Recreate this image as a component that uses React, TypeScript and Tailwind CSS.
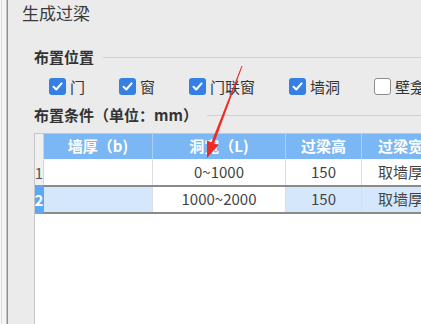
import React from 'react';

const options = [
  { label: '门', checked: true },
  { label: '窗', checked: true },
  { label: '门联窗', checked: true },
  { label: '墙洞', checked: true },
  { label: '壁龛', checked: false },
];

const rows = [
  { id: 1, wall: '', span: '0~1000', height: '150', width: '取墙厚', selected: false },
  { id: 2, wall: '', span: '1000~2000', height: '150', width: '取墙厚', selected: true },
];

function CheckBox({ checked }: { checked: boolean }) {
  if (!checked) {
    return <div className="w-[17px] h-[17px] shrink-0 rounded-[3px] border border-[#8c8c8c] bg-white" />;
  }
  return (
    <div className="w-[17px] h-[17px] shrink-0 rounded-[3px] bg-[#3580e2] flex items-center justify-center">
      <svg width="13" height="13" viewBox="0 0 13 13" fill="none">
        <path d="M2.5 6.8 L5.3 9.5 L10.6 3.4" stroke="white" strokeWidth="2" strokeLinecap="round" strokeLinejoin="round" />
      </svg>
    </div>
  );
}

function SectionTitle({ text }: { text: string }) {
  return (
    <div className="flex items-center h-5 gap-[9px]">
      <span className="text-[15px] font-bold text-[#333] whitespace-nowrap">{text}</span>
      <div className="flex-1 h-px bg-[#d2d2d2]" />
    </div>
  );
}

export default function App() {
  return (
    <div className="relative w-[421px] h-[324px] overflow-hidden flex bg-[#ebebeb] font-['Noto_Sans_CJK_SC','Noto_Sans',sans-serif] text-[#333]">
      {/* left window edge */}
      <div className="w-[8px] shrink-0 flex">
        <div className="w-[2px] bg-[#f6f6f6] border-r border-[#dcdcdc]" />
        <div className="w-[4px] bg-[#f4f4f4]" />
        <div className="w-[2px] bg-[#8e8e8e] border-l border-[#c4c4c4]" />
      </div>

      <div className="flex-1 flex flex-col min-w-0">
        {/* Title */}
        <div className="h-[26px] pl-[14px] flex items-center text-[17px] text-[#3a3a3a]">生成过梁</div>

        <div className="flex-1 flex flex-col pl-[26px] min-h-0">
          <div className="mt-[21px]">
            <SectionTitle text="布置位置" />
          </div>

          {/* Checkbox row */}
          <div className="mt-[9px] h-5 pl-[15px] flex items-center gap-[34px] whitespace-nowrap">
            {options.map((o) => (
              <div key={o.label} className="flex items-center gap-[4px]">
                <CheckBox checked={o.checked} />
                <span className="text-[15px] leading-none">{o.label}</span>
              </div>
            ))}
          </div>

          <div className="mt-[9px]">
            <SectionTitle text="布置条件（单位：mm）" />
          </div>

          {/* Table */}
          <div className="mt-[8px] flex-1 bg-white border-l border-t border-[#c6c6c6] flex flex-col text-[15px]">
            <div className="flex h-[25px] shrink-0">
              <div className="w-[9px] shrink-0 bg-[#efefef] border-r border-[#d6d6d6]" />
              <div className="flex flex-1 bg-[#7ab7f4] text-white font-semibold whitespace-nowrap">
                <div className="w-[109px] shrink-0 flex items-center justify-center border-r border-[#a7cff7]">墙厚（b)</div>
                <div className="w-[133px] shrink-0 flex items-center justify-center border-r border-[#a7cff7]">洞宽（L)</div>
                <div className="w-[76px] shrink-0 flex items-center justify-center border-r border-[#a7cff7]">过梁高</div>
                <div className="flex-1 flex items-center pl-[16px]">过梁宽</div>
              </div>
            </div>

            {rows.map((r) => (
              <div key={r.id} className={`flex shrink-0 ${r.selected ? 'h-[29px]' : 'h-[26px]'}`}>
                <div
                  className={`w-[9px] shrink-0 flex items-center justify-center text-[15px] leading-none border-r ${
                    r.selected ? 'bg-[#5ea8f2] text-white font-bold border-[#5ea8f2]' : 'bg-[#f0f0f0] text-[#555] border-[#d6d6d6]'
                  }`}
                >
                  {r.id}
                </div>
                <div
                  className={`flex flex-1 whitespace-nowrap text-[#444] ${
                    r.selected ? 'bg-[#d5e8fb] border-y-2 border-[#8a8a8a]' : 'bg-white'
                  }`}
                >
                  <div className="w-[109px] shrink-0 border-r border-[#dedede]">{r.wall}</div>
                  <div className="w-[133px] shrink-0 flex items-center justify-center bg-white border-r border-[#dedede]">{r.span}</div>
                  <div className="w-[76px] shrink-0 flex items-center justify-center border-r border-[#dedede]">{r.height}</div>
                  <div className="flex-1 flex items-center pl-[16px]">{r.width}</div>
                </div>
              </div>
            ))}
          </div>
        </div>
      </div>

      {/* red annotation arrow */}
      <svg className="absolute left-0 top-0 pointer-events-none" width="421" height="324" viewBox="0 0 421 324">
        <polygon points="242.5,66 241.5,66 211.3,142.4 214.1,143.5" fill="#ee2b24" />
        <polygon points="207,158 206.9,140.6 218.6,145.1" fill="#ee2b24" />
      </svg>
    </div>
  );
}
